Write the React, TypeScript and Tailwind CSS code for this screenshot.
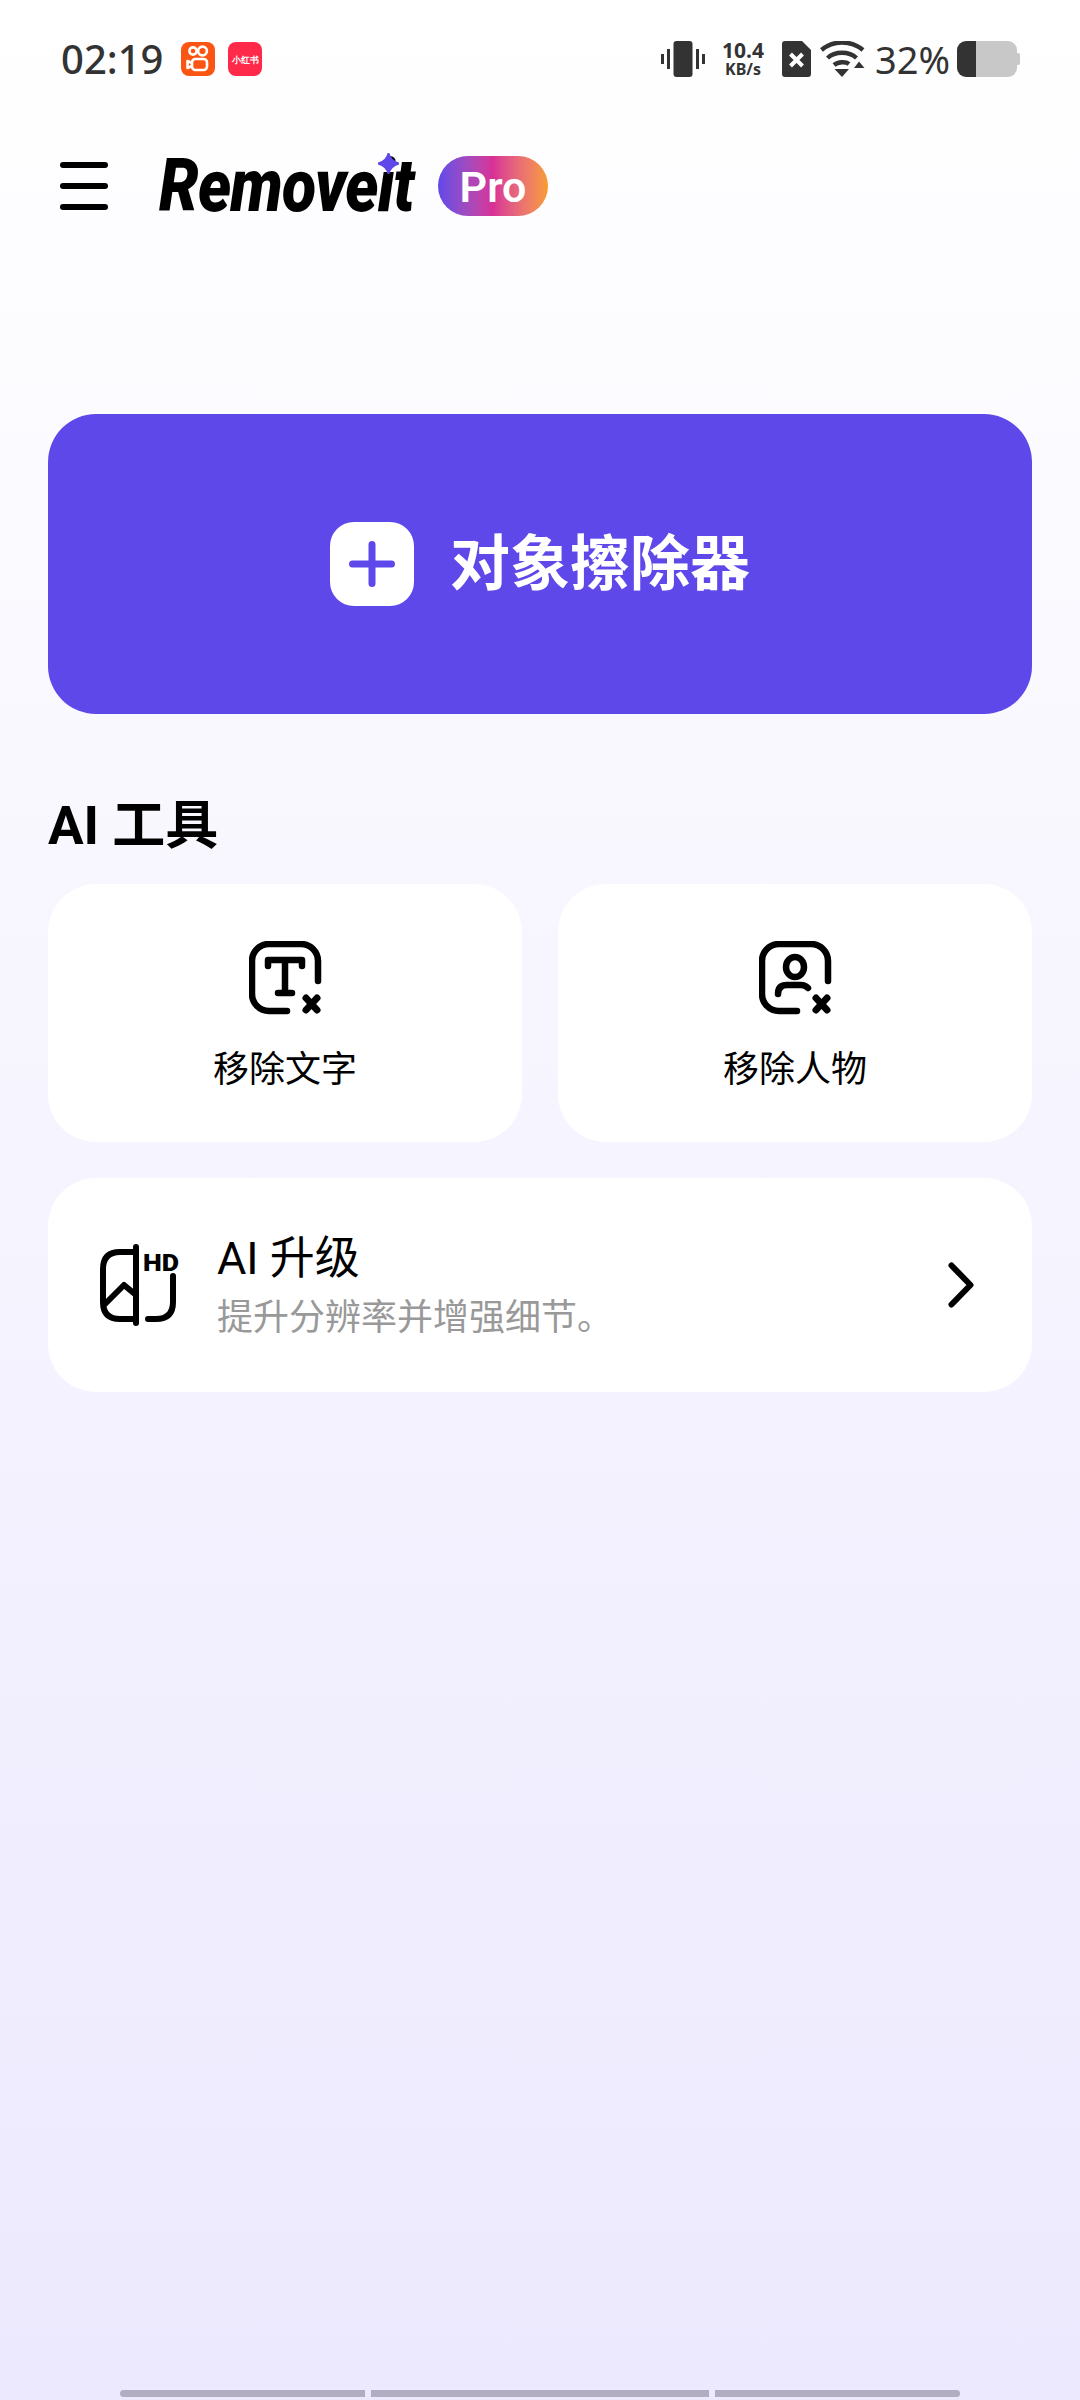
const FONT = "font-['Roboto','Noto_Sans_CJK_SC',sans-serif]";

function KuaishouIcon() {
  return (
    <div className="flex h-[34px] w-[34px] items-center justify-center rounded-[8px] bg-[#fb5513]">
      <svg width="24" height="28" viewBox="0 0 24 28" fill="none" stroke="#fff" strokeWidth="2.6">
        <circle cx="7" cy="6" r="3.6" />
        <circle cx="16.5" cy="6" r="4.4" />
        <rect x="6" y="14" width="15" height="11" rx="3.5" />
        <path d="M6 18 L1.5 16 V23 L6 21" strokeLinejoin="round" />
      </svg>
    </div>
  );
}

function RedNoteIcon() {
  return (
    <div className="flex h-[34px] w-[34px] items-center justify-center overflow-hidden rounded-[8px] bg-[#ff2a4a] text-[9px] leading-none font-bold whitespace-nowrap text-white">
      小红书
    </div>
  );
}

function StatusBar() {
  return (
    <div className="flex h-[118px] items-center justify-between pr-[60px] pl-[61px] font-['Noto_Sans',sans-serif] text-[#333333]">
      <div className="flex items-center">
        <span className="w-[120px] text-[40px] leading-none font-medium">02:19</span>
        <div className="flex gap-[13px]">
          <KuaishouIcon />
          <RedNoteIcon />
        </div>
      </div>
      <div className="flex items-center">
        {/* vibrate */}
        <svg width="44" height="36" viewBox="0 0 44 36" fill="#333333">
          <rect x="12.5" y="0" width="19" height="36" rx="3" />
          <rect x="0" y="13" width="3" height="10" />
          <rect x="6" y="8" width="3" height="20" />
          <rect x="35" y="8" width="3" height="20" />
          <rect x="41" y="13" width="3" height="10" />
        </svg>
        <div className="ml-[14px] flex h-[36px] w-[48px] flex-col items-center justify-between font-bold">
          <span className="text-[21px] leading-[18px]">10.4</span>
          <span className="text-[16px] leading-[16px]">KB/s</span>
        </div>
        {/* no sim */}
        <svg className="ml-[15px]" width="29" height="36" viewBox="0 0 29 36">
          <path d="M3 0 H20 L29 9 V33 a3 3 0 0 1 -3 3 H3 a3 3 0 0 1 -3 -3 V3 a3 3 0 0 1 3 -3 Z" fill="#333333" />
          <path d="M8.5 13 L20.5 25 M20.5 13 L8.5 25" stroke="#fff" strokeWidth="4" />
        </svg>
        {/* wifi */}
        <svg className="ml-[9px]" width="46" height="36" viewBox="0 0 46 36" fill="none" stroke="#333333" strokeWidth="4.4">
          <path d="M1.5 9 C13 -1 31 -1 43 9" />
          <path d="M7.5 17 C15 10 29 10 36.5 17" />
          <path d="M14 24 C18 20.5 26 20.5 29 23" />
          <path d="M14.5 28 H29 L22 36 Z" fill="#333333" stroke="none" />
          <path d="M34 27 L39 20.5 L44.5 27 Z" fill="#333333" stroke="none" />
        </svg>
        <span className="ml-[9px] w-[74px] text-[38px] leading-none">32%</span>
        {/* battery */}
        <div className="ml-[8px] flex h-[36px] items-center">
          <div className="h-full w-[19px] rounded-l-[9px] bg-[#333333]" />
          <div className="h-full w-[41px] rounded-r-[9px] bg-[#c8c8c8]" />
          <div className="h-[12px] w-[3px] rounded-r-[2px] bg-[#c8c8c8]" />
        </div>
      </div>
    </div>
  );
}

function Header() {
  return (
    <div className="flex h-[136px] items-center pl-[60px]">
      <div className="flex w-[48px] flex-col gap-[15px]">
        <div className="h-[6px] rounded-full bg-black" />
        <div className="h-[6px] rounded-full bg-black" />
        <div className="h-[6px] rounded-full bg-black" />
      </div>
      <div className="relative ml-[51px] h-[60px] w-[257px]">
        <span className="inline-block origin-left scale-x-[0.85] text-[74px] leading-[60px] font-black tracking-[-1px] whitespace-nowrap text-black italic">
          Removeit
        </span>
        <svg className="absolute top-[-3px] left-[219px]" width="21" height="21" viewBox="0 0 18 18">
          <path d="M9 0 Q10.5 7 18 9 Q10.5 11 9 18 Q7.5 11 0 9 Q7.5 7 9 0 Z" fill="#5e48ea" stroke="#5e48ea" strokeWidth="1.5" strokeLinejoin="round" />
        </svg>
      </div>
      <div className="ml-[22px] flex h-[60px] w-[110px] items-center justify-center rounded-full bg-linear-to-r from-[#5f48ea] via-[#d92f96] to-[#f89c2e] pt-[3px] text-[43px] leading-none font-semibold text-white">
        Pro
      </div>
    </div>
  );
}

function RemoveTextIcon() {
  return (
    <svg width="73" height="74" viewBox="0 0 73 74" fill="none" stroke="#000" strokeWidth="6.5" strokeLinecap="round" strokeLinejoin="round">
      <path d="M69 40 V20 A17 17 0 0 0 52 3 H20 A17 17 0 0 0 3 20 V53 A17 17 0 0 0 20 70 H38" />
      <path d="M19 25 V19 H53 V25 M36 19 V52 M29 52 H43" />
      <path d="M57 57 L68 69 M68 57 L57 69" strokeWidth="7" />
    </svg>
  );
}

function RemovePersonIcon() {
  return (
    <svg width="73" height="74" viewBox="0 0 73 74" fill="none" stroke="#000" strokeWidth="6.5" strokeLinecap="round" strokeLinejoin="round">
      <path d="M69 40 V20 A17 17 0 0 0 52 3 H20 A17 17 0 0 0 3 20 V53 A17 17 0 0 0 20 70 H38" />
      <ellipse cx="36" cy="26" rx="9" ry="10" />
      <path d="M19 53 Q19 44 28 44 H42 Q46 44 49 47" />
      <path d="M57 57 L68 69 M68 57 L57 69" strokeWidth="7" />
    </svg>
  );
}

function HdIcon() {
  return (
    <svg width="80" height="82" viewBox="0 0 80 82" fill="none" stroke="#000" strokeWidth="6" strokeLinecap="round" strokeLinejoin="round">
      <path d="M36 3 V79" />
      <path d="M36 8 H20 Q3 8 3 25 V58 Q3 75 20 75 H36" />
      <path d="M5 60 L24 41 L36 51" />
      <path d="M73 32 V58 Q73 75 56 75 H48" />
      <text x="43" y="27" fontSize="23" fontWeight="900" fill="#000" stroke="none" textLength="36" lengthAdjust="spacingAndGlyphs" fontFamily="Roboto, sans-serif">
        HD
      </text>
    </svg>
  );
}

function ToolCard({ icon, label }: { icon: React.ReactNode; label: string }) {
  return (
    <div className="flex h-[258px] flex-col items-center rounded-[48px] bg-white pt-[57px]">
      {icon}
      <span className="mt-[30px] text-[36px] leading-[50px] text-black">{label}</span>
    </div>
  );
}

export default function App() {
  return (
    <div className={`${FONT} flex min-h-[2400px] w-[1080px] flex-col bg-linear-to-b from-white to-[#ece9fe]`}>
      <StatusBar />
      <Header />

      <main className="flex flex-col px-12 pt-[160px]">
        {/* Big button */}
        <div className="flex h-[300px] items-center justify-center rounded-[48px] bg-[#5e48ea]">
          <div className="flex h-[84px] w-[84px] items-center justify-center rounded-[24px] bg-white">
            <svg width="46" height="46" viewBox="0 0 46 46" fill="none" stroke="#5e48ea" strokeWidth="7" strokeLinecap="round">
              <path d="M23 3.5 V42.5 M3.5 23 H42.5" />
            </svg>
          </div>
          <span className="ml-[36px] pt-[2px] text-[60px] leading-none font-bold text-white">对象擦除器</span>
        </div>

        <h2 className="mt-[81px] text-[53px] leading-[62px] font-bold text-black">AI 工具</h2>

        <div className="mt-[27px] grid grid-cols-2 gap-9">
          <ToolCard icon={<RemoveTextIcon />} label="移除文字" />
          <ToolCard icon={<RemovePersonIcon />} label="移除人物" />
        </div>

        <div className="mt-9 flex h-[214px] items-center rounded-[48px] bg-white pr-[58px] pl-[52px]">
          <HdIcon />
          <div className="ml-[37px] flex flex-1 flex-col pt-[3px]">
            <span className="text-[45px] leading-[56px] text-black">AI 升级</span>
            <span className="mt-[6px] text-[36px] leading-[50px] text-[#999999]">提升分辨率并增强细节。</span>
          </div>
          <svg width="26" height="46" viewBox="0 0 26 46" fill="none" stroke="#000" strokeWidth="6" strokeLinecap="round" strokeLinejoin="round">
            <path d="M3.5 3.5 L22.5 23 L3.5 42.5" />
          </svg>
        </div>
      </main>

      {/* Bottom bar */}
      <div className="mt-auto mb-[3px] flex h-[7px] justify-center gap-[6px]">
        <div className="w-[245px] rounded-l-full bg-[#b1aec2]" />
        <div className="w-[338px] bg-[#b1aec2]" />
        <div className="w-[245px] rounded-r-full bg-[#b1aec2]" />
      </div>
    </div>
  );
}
